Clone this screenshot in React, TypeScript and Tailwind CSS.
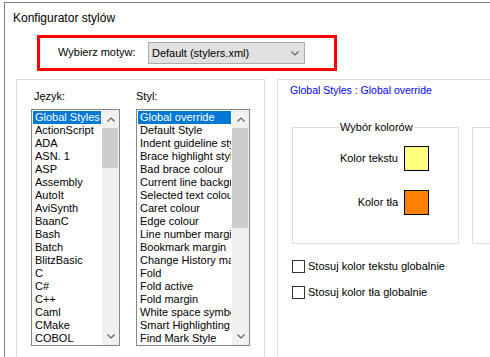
import React from 'react'

const languages = [
  'Global Styles', 'ActionScript', 'ADA', 'ASN. 1', 'ASP', 'Assembly', 'AutoIt', 'AviSynth', 'BaanC',
  'Bash', 'Batch', 'BlitzBasic', 'C', 'C#', 'C++', 'Caml', 'CMake', 'COBOL',
]

const styles = [
  'Global override', 'Default Style', 'Indent guideline style', 'Brace highlight style', 'Bad brace colour',
  'Current line background colour', 'Selected text colour', 'Caret colour', 'Edge colour', 'Line number margin',
  'Bookmark margin', 'Change History margin', 'Fold', 'Fold active', 'Fold margin', 'White space symbol',
  'Smart Highlighting', 'Find Mark Style',
]

function Chevron({ up }: { up?: boolean }) {
  return (
    <svg width="8" height="5" viewBox="0 0 8 5" fill="none">
      <path d={up ? 'M0.5 4.5 L4 1 L7.5 4.5' : 'M0.5 0.5 L4 4 L7.5 0.5'} stroke="#606060" strokeWidth="1.2" />
    </svg>
  )
}

interface ListBoxProps {
  items: string[]
  width: string
  thumb: string
}

function ListBox({ items, width, thumb }: ListBoxProps) {
  return (
    <div className={`flex h-[237px] shrink-0 border border-[#828790] bg-white ${width}`}>
      <div className="min-w-0 flex-1 px-[1px] pt-[1px]">
        {items.map((item, i) => (
          <div
            key={item}
            className={`h-[13px] overflow-hidden whitespace-nowrap pl-[2px] text-[11px] leading-[13px] ${
              i === 0 ? 'bg-[#0078d7] text-white' : 'text-black'
            }`}
          >
            {item}
          </div>
        ))}
      </div>
      <div className="flex w-[17px] shrink-0 flex-col bg-[#f0f0f0]">
        <div className="flex h-[18px] items-center justify-center">
          <Chevron up />
        </div>
        <div className={`mr-[1px] bg-[#cdcdcd] ${thumb}`} />
        <div className="flex-1" />
        <div className="flex h-[17px] items-center justify-center">
          <Chevron />
        </div>
      </div>
    </div>
  )
}

function Checkbox({ label }: { label: string }) {
  return (
    <div className="flex h-[13px] items-center">
      <div className="h-[13px] w-[13px] border border-[#333333] bg-white" />
      <span className="ml-[3px] whitespace-nowrap text-[11px] leading-[13px] text-black">{label}</span>
    </div>
  )
}

export default function App() {
  return (
    <div
      className="h-[357px] w-[490px] overflow-hidden bg-white pl-[4px] pt-[2px] text-black"
      style={{ fontFamily: '"Liberation Sans", Arial, sans-serif' }}
    >
      <div className="h-full border-l border-t border-[#828282]">
        <div className="mt-[8px] pl-[8px] text-[12px] leading-[14px]">Konfigurator stylów</div>

        {/* theme picker */}
        <div className="ml-[32px] mt-[10px] h-[36px] w-[300px] border-[3px] border-[#ff0000]">
          <div className="flex items-start pl-[18px] pt-[4px]">
            <span className="w-[90px] text-[11px] leading-[21px]">Wybierz motyw:</span>
            <div className="flex h-[22px] w-[157px] items-center justify-between border border-[#adadad] bg-[#e1e1e1] pl-[3px] pr-[5px]">
              <span className="text-[11px] leading-[13px]">Default (stylers.xml)</span>
              <Chevron />
            </div>
          </div>
        </div>

        <div className="mt-[8px] flex">
          {/* left panel */}
          <div className="ml-[11px] flex h-[300px] w-[249px] shrink-0 border-l border-r border-t border-[#dcdcdc] pt-[10px]">
            <div className="ml-[14px] flex flex-col">
              <span className="h-[13px] pl-[3px] text-[11px] leading-[13px]">Język:</span>
              <div className="mt-[6px]">
                <ListBox items={languages} width="w-[89px]" thumb="h-[40px]" />
              </div>
            </div>
            <div className="ml-[16px] flex flex-col">
              <span className="h-[13px] text-[11px] leading-[13px]">Styl:</span>
              <div className="mt-[6px]">
                <ListBox items={styles} width="w-[114px]" thumb="h-[100px]" />
              </div>
            </div>
          </div>

          {/* right panel */}
          <div className="ml-[12px] h-[300px] min-w-0 flex-1 border-l border-t border-[#dcdcdc] pt-[4px]">
            <div className="whitespace-nowrap pl-[12px] text-[10.5px] leading-[13px] text-[#0000ff]">
              Global Styles : Global override
            </div>
            <div className="mt-[30px] flex pl-[14px]">
              <div className="relative h-[117px] w-[167px] shrink-0 border border-[#dcdcdc] pt-[18px]">
                <span className="absolute left-[46px] top-[-7px] bg-white px-[1px] text-[11px] leading-[13px]">
                  Wybór kolorów
                </span>
                <div className="flex h-[25px] items-center">
                  <span className="w-[105px] text-right text-[11px] leading-[13px]">Kolor tekstu</span>
                  <div className="ml-[6px] h-[25px] w-[25px] border border-black bg-[#ffff80]" />
                </div>
                <div className="mt-[19px] flex h-[25px] items-center">
                  <span className="w-[105px] text-right text-[11px] leading-[13px]">Kolor tła</span>
                  <div className="ml-[6px] h-[25px] w-[25px] border border-black bg-[#ff8000]" />
                </div>
              </div>
              <div className="ml-[13px] h-[117px] w-[100px] shrink-0 border border-[#dcdcdc]" />
            </div>
            <div className="mt-[16px] flex flex-col gap-[13px] pl-[14px]">
              <Checkbox label="Stosuj kolor tekstu globalnie" />
              <Checkbox label="Stosuj kolor tła globalnie" />
            </div>
          </div>
        </div>
      </div>
    </div>
  )
}
